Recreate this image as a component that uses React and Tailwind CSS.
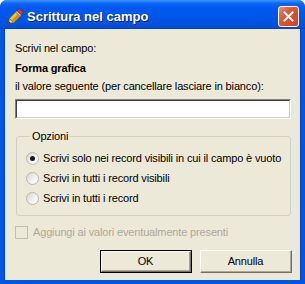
import React from 'react';

const font = { fontFamily: '"Liberation Sans", Arial, sans-serif' };

const Pencil = () => (
    <svg width="18" height="18" viewBox="0 0 18 18" className="shrink-0">
        <g transform="rotate(-45 9 9)">
            {/* tip */}
            <polygon points="0,9 4,6 4,12" fill="#f3d9a4" stroke="#6b4a1a" strokeWidth="0.6" />
            <polygon points="0,9 1.6,7.9 1.6,10.1" fill="#222" />
            {/* body */}
            <rect x="4" y="6" width="9" height="6" fill="#f5c518" stroke="#8a5a00" strokeWidth="0.6" />
            <rect x="4" y="9" width="9" height="3" fill="#e08a10" />
            {/* ferrule */}
            <rect x="13" y="6" width="2" height="6" fill="#c8c8c8" stroke="#666" strokeWidth="0.5" />
            {/* eraser */}
            <rect x="15" y="6" width="3" height="6" rx="1" fill="#e0402a" stroke="#7a1a10" strokeWidth="0.6" />
        </g>
    </svg>
);

const Radio = ({ checked, label }) => (
    <div className="flex items-center h-[20px] gap-[4px]">
        <div className="w-[13px] h-[13px] rounded-full border border-[#b8b6ad] bg-[linear-gradient(135deg,#d8d6ce_0%,#f4f3ee_60%,#ffffff_100%)] flex items-center justify-center">
            {checked && <div className="w-[5px] h-[5px] rounded-full bg-[#1a1a1a]" />}
        </div>
        <span>{label}</span>
    </div>
);

const Button = ({ children, isDefault }) => (
    <div className={`w-[92px] h-[23px] ${isDefault ? 'border border-black' : ''}`}>
        <div className="w-full h-full border-t border-l border-white border-r border-b border-r-[#716f64] border-b-[#716f64]">
            <div className="w-full h-full border-r border-b border-[#aca899] bg-[#ece9d8] flex items-center justify-center text-black">
                {children}
            </div>
        </div>
    </div>
);

export default function App() {
    return (
        <div style={font} className="w-[305px] h-[284px] flex flex-col rounded-t-[7px] overflow-hidden bg-[#0055e5] text-[11px] tracking-[-0.15px] text-black">
            {/* title bar */}
            <div className="h-[29px] shrink-0 flex items-center pt-[4px] pl-[6px] pr-[6px] bg-[linear-gradient(to_bottom,#3d95ff_0%,#0a66f6_12%,#0058ee_30%,#0055e5_70%,#0050dc_90%,#0043c4_100%)]">
                <Pencil />
                <span className="ml-[3px] text-white font-bold text-[13px] tracking-normal [text-shadow:1px_1px_0_#0a1a8a]">
                    Scrittura nel campo
                </span>
                <div className="ml-auto w-[21px] h-[21px] rounded-[3px] border border-white bg-[linear-gradient(135deg,#f08c6c_0%,#e05a38_35%,#d23d16_100%)] flex items-center justify-center">
                    <svg width="11" height="11" viewBox="0 0 11 11">
                        <path d="M1.5 1.5 L9.5 9.5 M9.5 1.5 L1.5 9.5" stroke="white" strokeWidth="2" strokeLinecap="square" />
                    </svg>
                </div>
            </div>

            {/* client area */}
            <div className="flex-1 mx-[4px] mb-[4px] bg-[#ece9d8] pl-[10px] pt-[12px] border-l border-r border-[#0042c8]">
                <div className="h-[14px] leading-[14px]">Scrivi nel campo:</div>
                <div className="h-[14px] leading-[14px] mt-[6px] font-bold">Forma grafica</div>
                <div className="h-[14px] leading-[14px] mt-[4px]">il valore seguente (per cancellare lasciare in bianco):</div>

                <div className="mt-[6px] w-[276px] h-[20px] border-t border-l border-[#808080] border-r border-b border-r-white border-b-white">
                    <div className="w-full h-full border-t border-l border-[#404040] border-r border-b border-r-[#d4d0c8] border-b-[#d4d0c8] bg-white" />
                </div>

                <fieldset className="mt-[10px] ml-[1px] w-[275px] border border-[#d0d0bf] rounded-[3px] pl-[9px] pb-[7px]">
                    <legend className="ml-[4px] px-[2px] h-[14px] leading-[14px]">Opzioni</legend>
                    <div className="pt-[5px]">
                        <Radio checked label="Scrivi solo nei record visibili in cui il campo è vuoto" />
                        <Radio label="Scrivi in tutti i record visibili" />
                        <Radio label="Scrivi in tutti i record" />
                    </div>
                </fieldset>

                <div className="mt-[8px] h-[16px] flex items-center gap-[5px] text-[#aca899]">
                    <div className="w-[13px] h-[13px] border border-[#c2bfb0] bg-[#ece9d8]" />
                    <span>Aggiungi ai valori eventualmente presenti</span>
                </div>

                <div className="mt-[10px] ml-[85px] flex gap-[8px]">
                    <Button isDefault>OK</Button>
                    <Button>Annulla</Button>
                </div>
            </div>
        </div>
    );
}
